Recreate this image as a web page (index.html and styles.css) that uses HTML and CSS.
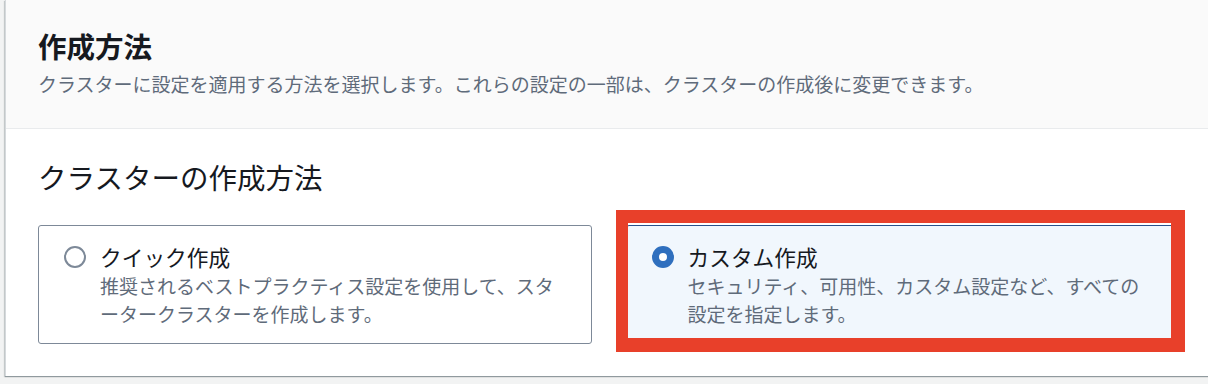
FILE: index.html
```html
<!DOCTYPE html>
<html lang="ja">
<head>
<meta charset="utf-8">
<title>作成方法</title>
<link rel="stylesheet" href="styles.css">
</head>
<body>
<div class="page">
  <section class="container">
    <header class="container-header">
      <h1 class="title">作成方法</h1>
      <p class="subtitle">クラスターに設定を適用する方法を選択します。これらの設定の一部は、クラスターの作成後に変更できます。</p>
    </header>
    <div class="container-body">
      <h2 class="section-title">クラスターの作成方法</h2>
      <div class="tiles">
        <div class="tile">
          <span class="radio"></span>
          <div class="tile-text">
            <div class="tile-label">クイック作成</div>
            <div class="tile-desc">推奨されるベストプラクティス設定を使用して、スターター​クラスターを作成します。</div>
          </div>
        </div>
        <div class="tile selected">
          <span class="radio checked"></span>
          <div class="tile-text">
            <div class="tile-label">カスタム作成</div>
            <div class="tile-desc">セキュリティ、可用性、カスタム設定など、すべての設定を指定します。</div>
          </div>
          <span class="annotation"></span>
        </div>
      </div>
    </div>
  </section>
</div>
</body>
</html>
```

FILE: styles.css
```css
html, body {
  margin: 0;
  padding: 0;
}
body {
  background: #f2f3f3;
  font-family: "Noto Sans CJK JP", "Noto Sans", sans-serif;
  overflow: hidden;
  width: 1208px;
  height: 384px;
}
.page {
  padding-left: 5px;
}
.container {
  width: 1205px;
  background: #ffffff;
  border-left: 1px solid #d5d9dc;
  box-shadow: 0 1px 1px 0 rgba(0, 28, 36, 0.3), -1px 1px 1px 0 rgba(0, 28, 36, 0.15);
}
.container-header {
  background: #fafafa;
  border-bottom: 1px solid #e9ebed;
  padding: 28px 32px 30px 32px;
}
.title {
  margin: 0;
  font-size: 28.5px;
  line-height: 36px;
  font-weight: 700;
  color: #16191f;
}
.subtitle {
  margin: 6px 0 0 0;
  font-size: 19px;
  line-height: 28px;
  color: #5f6b7a;
}
.container-body {
  padding: 30px 32px 32px 32px;
}
.section-title {
  margin: 0;
  font-size: 28.5px;
  line-height: 36px;
  font-weight: 400;
  color: #16191f;
}
.tiles {
  margin-top: 30px;
  display: grid;
  grid-template-columns: 1fr 1fr;
  column-gap: 34px;
}
.tile {
  position: relative;
  display: flex;
  align-items: flex-start;
  gap: 14px;
  border: 1px solid #7d8998;
  border-radius: 3px;
  padding: 16px 25px 15px 25px;
  background: #ffffff;
}
.tile.selected {
  border-color: #29508a;
  background: #f1f7fd;
}
.radio {
  flex: none;
  box-sizing: border-box;
  width: 22px;
  height: 22px;
  margin-top: 4px;
  border: 2px solid #7d8998;
  border-radius: 50%;
  background: #ffffff;
}
.radio.checked {
  border: 7px solid #2f6fbe;
}
.tile-text {
  flex: 1;
}
.tile-label {
  font-size: 21.7px;
  line-height: 30px;
  color: #16191f;
}
.tile-desc {
  font-size: 19px;
  line-height: 28px;
  color: #5f6b7a;
}
.annotation {
  position: absolute;
  left: -11px;
  top: -16px;
  right: -7px;
  bottom: -9px;
  border-style: solid;
  border-color: #e8402a;
  border-width: 13px 14px 14px 12px;
  pointer-events: none;
}
```
